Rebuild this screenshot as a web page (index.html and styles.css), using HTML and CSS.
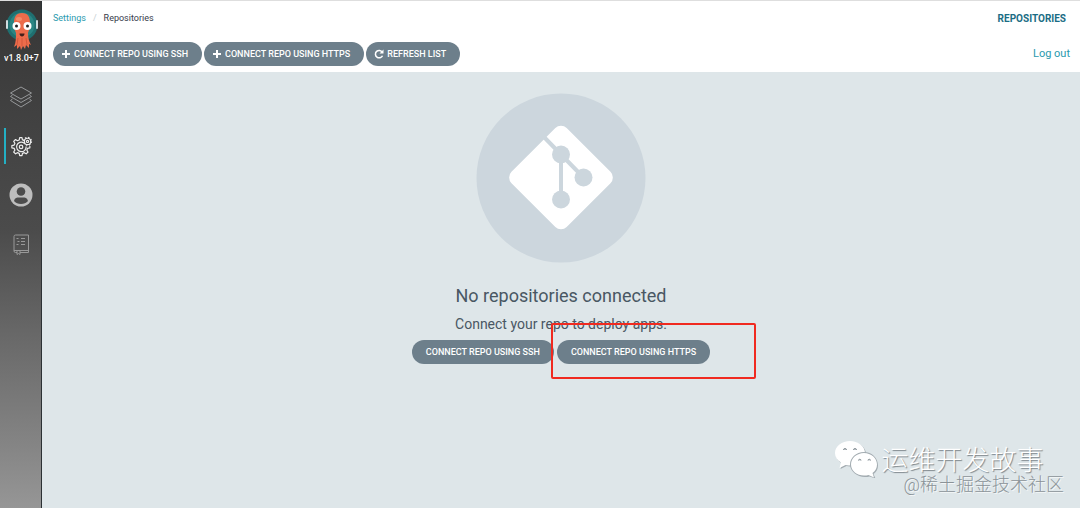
FILE: index.html
```html
<!DOCTYPE html>
<html lang="en">
<head>
<meta charset="utf-8">
<title>Repositories</title>
<link rel="stylesheet" href="styles.css">
</head>
<body>
<div class="app">
  <nav class="sidebar" aria-label="Main">
    <a class="brand" href="#" aria-label="Argo">
      <svg class="brand-logo" viewBox="0 0 34 42">
        <circle cx="17" cy="17" r="15.500" fill="#1f6f70"/>
        <circle cx="17" cy="17" r="12.500" fill="#2a8583"/>
        <rect x="1" y="12" width="2" height="9" rx="1" fill="#cfdcdf"/>
        <rect x="31" y="12" width="2" height="9" rx="1" fill="#cfdcdf"/>
        <path d="M17 5C11 5 9 9 9 15c0 5 1 7 2 10 0 5 0 9-2 14l3-2v4l3-3 1 4 2-4 2 3 1-4 3 3v-4l2 1c-2-4-3-7-3-12 1-3 2-5 2-10 0-6-2-10-8-10z" fill="#ec6c4b"/>
        <path d="M13 30l-1 7M17 30v8M21 30l1 7" stroke="#d4573c" fill="none"/>
        <ellipse cx="14" cy="11" rx="3" ry="2" fill="#f28b69"/>
        <circle cx="11.500" cy="18" r="4" fill="#fff"/>
        <circle cx="22.500" cy="18" r="4" fill="#fff"/>
        <circle cx="11.500" cy="18" r="1.500" fill="#222"/>
        <circle cx="22.500" cy="18" r="1.500" fill="#222"/>
        <path d="M14.500 25.500h5c0 4-5 4-5 0z" fill="#451f1b"/>
      </svg>
      <span class="version">v1.8.0+7</span>
    </a>
    <a class="nav-item" href="#" aria-label="Applications">
      <svg viewBox="0 0 24 24" fill="none" stroke="#96989a" stroke-linejoin="round">
        <path d="M12 2l10.500 6L12 14 1.500 8z"/>
        <path d="M3.500 10l-2 1.500L12 17.500l10.500-6-2-1.500"/>
        <path d="M3.500 14l-2 1.500L12 22l10.500-6.500-2-1.500"/>
      </svg>
    </a>
    <a class="nav-item active" href="#" aria-label="Settings">
      <svg viewBox="-1 -1 26 26" fill="none" stroke="#ececec" stroke-width="1.300" stroke-linejoin="round">
        <path d="M14 5.700l-1.500-.4-.5-2.300H9.500L9 5.500l-2 .8L5 5 3 7l1.300 2-.8 2-2.500.5V14l2.500.5.8 2L3 18.500l2 2 2-1.300 2 .8.500 2.500H12l.5-2.500 2-.8 2 1.300 2-2-1.300-2 .8-2 2.500-.5v-2"/>
        <path d="M14 8.500a5.200 5.200 0 1 0 2.500 4"/>
        <circle cx="11" cy="13" r="1.900"/>
        <circle cx="18" cy="7" r="3.400"/>
        <circle cx="18" cy="7" r="4.300" stroke-dasharray="1.600 1.780"/>
        <circle cx="18" cy="7" r="1.200"/>
      </svg>
    </a>
    <a class="nav-item" href="#" aria-label="User info">
      <svg viewBox="0 0 24 24">
        <circle cx="12" cy="12" r="11.500" fill="#bdbdbd"/>
        <circle cx="12" cy="8.500" r="4.300" fill="#4c4c4c"/>
        <path d="M5 18c1-4 4-3.500 7-3.500s6-.5 7 3.500c-3 4-11 4-14 0z" fill="#4c4c4c"/>
      </svg>
    </a>
    <a class="nav-item" href="#" aria-label="Documentation">
      <svg viewBox="0 0 24 24" fill="none" stroke="#999">
        <path d="M8 20.500H6.500a1.500 1.500 0 0 1-1.500-1.500V4.500A1.500 1.500 0 0 1 6.500 3h13v17.500H11"/>
        <path d="M5 18.500h14.500M8 18.500v4l1.500-1 1.500 1v-4"/>
        <path d="M7.500 6.500h2M12 6.500h4M8.500 9.500h2M12 9.500h4M7.500 12.500h2M12 12.500h4"/>
      </svg>
    </a>
  </nav>
  <div class="page">
    <header class="topbar">
      <div class="topbar-row">
        <nav class="breadcrumbs" aria-label="Breadcrumb">
          <a href="#">Settings</a>
          <span class="separator">/</span>
          <span>Repositories</span>
        </nav>
        <span class="page-title">REPOSITORIES</span>
      </div>
      <div class="topbar-row">
        <div class="toolbar">
          <button class="btn" type="button"><svg class="btn-icon" viewBox="0 0 10 10"><path d="M5 1v8M1 5h8" stroke="#fff" stroke-width="2"/></svg>CONNECT REPO USING SSH</button>
          <button class="btn" type="button"><svg class="btn-icon" viewBox="0 0 10 10"><path d="M5 1v8M1 5h8" stroke="#fff" stroke-width="2"/></svg>CONNECT REPO USING HTTPS</button>
          <button class="btn" type="button"><svg class="btn-icon" viewBox="0 0 10 10"><path d="M8.300 3.200A3.700 3.700 0 1 0 8.500 6.700" stroke="#fff" stroke-width="1.500" fill="none"/><path d="M9.500.6v4H5.500z" fill="#fff"/></svg>REFRESH LIST</button>
        </div>
        <a class="logout" href="#">Log out</a>
      </div>
    </header>
    <main class="empty-state">
      <svg class="empty-icon" viewBox="0 0 170 170">
        <circle cx="85" cy="85" r="84.500" fill="#ccd6dd"/>
        <rect x="46" y="45.500" width="78" height="78" rx="8" fill="#fff" transform="rotate(45 85 84.500)"/>
        <path d="M67 43L107 84M85 62v45" stroke="#ccd6dd" stroke-width="4" fill="none"/>
        <circle cx="85" cy="61.500" r="9" fill="#ccd6dd"/>
        <circle cx="107.500" cy="84.500" r="9" fill="#ccd6dd"/>
        <circle cx="85" cy="106.500" r="9" fill="#ccd6dd"/>
      </svg>
      <h1>No repositories connected</h1>
      <p>Connect your repo to deploy apps.</p>
      <div class="empty-actions">
        <button class="btn" type="button">CONNECT REPO USING SSH</button>
        <div class="marked">
          <button class="btn" type="button">CONNECT REPO USING HTTPS</button>
          <span class="marker"></span>
        </div>
      </div>
    </main>
    <div class="watermark">
      <svg class="wechat" viewBox="0 0 44 38">
        <path fill="#a3acb1" d="M17 2C9 2 2 7 2 14c0 4 2 7 6 9.500L6.500 29l6-3c2 .5 5 .5 7 0C32 25 32 19 32 14 32 7 25 2 17 2z"/>
        <path fill="#fff" d="M16 1C8 1 1 6 1 13c0 4 2 7 6 9.500L5.500 28l6-3c2 .5 5 .5 7 0C31 24 31 18 31 13 31 6 24 1 16 1z"/>
        <path fill="#a3acb1" d="M30 12c-8 0-14 6-14 12.500S23 37 31 37c2 0 3 0 4.500-.5l6 2-2-4.500c3-2 4.500-5 4.500-8.500C44 18 38 12 30 12z"/>
        <path fill="#fff" d="M30 13c-7 0-13 5-13 11.500S23 35.500 30 35.500c2 0 3 0 4.500-.5l5.500 2.500-1.500-4.500c3-2 4.500-5 4.500-8.500C43 18 37 13 30 13z"/>
        <g fill="#c3cbd0" stroke="#8b9499">
          <path d="M9.500 10a1.500 1.500 0 0 1 3 0M19.500 10a1.500 1.500 0 0 1 3 0M24.500 20.500a1.200 1.200 0 0 1 2.500 0M34 20.500a1.200 1.200 0 0 1 2.500 0"/>
        </g>
      </svg>
      <div class="watermark-text">
        <span class="watermark-name">运维开发故事</span>
        <span class="watermark-site">@稀土掘金技术社区</span>
      </div>
    </div>
  </div>
</div>
</body>
</html>
```
FILE: styles.css
```css
* { box-sizing: border-box; }

body {
  margin: 0;
  font-family: Roboto, "Noto Sans CJK SC", sans-serif;
  color: #363c4a;
  background: #dee6e9;
}

a { color: #2a9aae; text-decoration: none; }

.app { display: flex; min-height: 100vh; border-top: 1px solid #dedede; }

.sidebar {
  display: flex;
  flex-direction: column;
  align-items: center;
  flex: 0 0 42px;
  border-right: 1px solid #2c3134;
  background: linear-gradient(#363636 0%, #404040 20%, #4b4b4b 45%, #676767 65%, #858585 88%, #969696 100%);
}

.brand {
  display: flex;
  flex-direction: column;
  align-items: center;
  width: 100%;
  height: 72px;
  padding: 7px 2px 0 4px;
  overflow: hidden;
}

.brand-logo { width: 34px; height: 42px; }

.version {
  width: 100%;
  overflow: hidden;
  color: #fff;
  font-size: 9px;
  font-weight: 500;
  line-height: 16px;
  white-space: nowrap;
}

.nav-item {
  display: flex;
  align-items: center;
  justify-content: center;
  width: 100%;
  height: 36px;
  margin: 6px 0 7px;
}

.nav-item svg { width: 24px; height: 24px; }

.sidebar .active {
  align-self: flex-end;
  width: 37px;
  padding-right: 4px;
  border-left: 2px solid #23b0c4;
}

.page { position: relative; display: flex; flex: 1; flex-direction: column; }

.topbar { padding: 0 10px 0 11px; background: #fff; }

.topbar-row {
  display: flex;
  align-items: center;
  justify-content: space-between;
  height: 34px;
}

.topbar-row + .topbar-row { height: 37px; }

.breadcrumbs { display: flex; gap: 7px; font-size: 9px; }

.separator { color: #c8d0d4; }

.page-title { padding-right: 4px; color: #1b6d85; font-size: 10px; font-weight: 700; }

.toolbar { display: flex; gap: 2px; }

.btn {
  display: flex;
  align-items: center;
  gap: 3px;
  height: 24px;
  padding: 0 14px;
  border: 0;
  border-radius: 12px;
  color: #fff;
  background: #6d7f8b;
  font: 500 9px Roboto, sans-serif;
  white-space: nowrap;
}

.toolbar .btn { padding-left: 8px; }

.btn-icon { width: 10px; height: 10px; }

.logout { font-size: 11px; }

.empty-state {
  display: flex;
  flex-direction: column;
  align-items: center;
  padding: 21px 0;
  color: #495763;
}

.empty-icon { width: 170px; height: 170px; }

h1 { margin: 21px 0 0; font-size: 18px; font-weight: 400; line-height: 24px; }

p { margin: 4px 0 0; font-size: 14px; line-height: 24px; }

.empty-actions { display: flex; gap: 3px; margin-top: 4px; }

.marked { position: relative; }

.marker {
  position: absolute;
  top: -17px;
  right: -46px;
  bottom: -15px;
  left: -6px;
  border: 2px solid #f02a20;
  border-radius: 2px;
  pointer-events: none;
}

.watermark {
  position: absolute;
  right: 16px;
  bottom: 15px;
  display: flex;
  gap: 4px;
}

.wechat { width: 44px; height: 38px; }

.watermark-text { display: flex; flex-direction: column; padding-top: 5px; }

.watermark-name {
  color: #fff;
  font-size: 27px;
  font-weight: 300;
  line-height: 32px;
  text-shadow: 1px 1px 1px #7d868b;
}

.watermark-site {
  align-self: flex-end;
  padding-left: 22px;
  color: #8b9398;
  font-size: 18px;
  font-weight: 300;
  line-height: 16px;
  text-shadow: 1px 1px 0 #f4f7f8;
}
```
